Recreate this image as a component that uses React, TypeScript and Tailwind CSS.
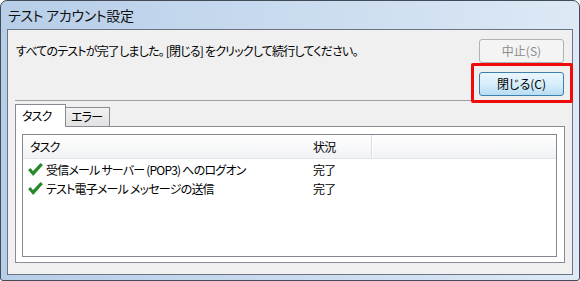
import { Fragment } from "react";

const TASKS = [
  { name: "受信メール サーバー (POP3) へのログオン", status: "完了" },
  { name: "テスト電子メール メッセージの送信", status: "完了" },
];

function CheckIcon() {
  return (
    <svg width="15" height="13" viewBox="0 0 15 13" className="shrink-0">
      <path
        d="M0.5 7 L2.5 5.5 L5 8.5 L12.5 0.5 L14.5 2 L5.2 12.5 Z"
        fill="#1f8f24"
        stroke="#12661a"
        strokeWidth="0.6"
        strokeLinejoin="round"
      />
    </svg>
  );
}

export default function App() {
  return (
    <div className="w-[580px] h-[281px] flex flex-col rounded-t-[7px] rounded-b-[3px] border border-[#424c58] bg-gradient-to-r from-[#b7cee8] via-[#c9dbef] to-[#dde9f5] font-['Meiryo_UI','Noto_Sans_CJK_JP',sans-serif] [font-feature-settings:'palt'] text-[12px] tracking-[-0.8px] text-black">
      {/* title bar */}
      <div className="h-[28px] flex items-center pl-[7px] text-[14px] tracking-[-0.3px] text-[#111]">
        テスト アカウント設定
      </div>

      {/* client area */}
      <div className="flex-1 mx-[6px] mb-[5px] border border-[#6b7480] bg-[#f0f0f0] flex flex-col">
        <div className="flex items-start">
          <p className="pl-[8px] pt-[13px] leading-[16px]">
            すべてのテストが完了しました。 [閉じる] をクリックして続行してください。
          </p>
          <div className="ml-auto pr-[8px] pt-[9px] flex flex-col gap-[9px]">
            <button className="w-[85px] h-[24px] rounded-[3px] border border-[#adb2b5] bg-[#f4f4f4] text-[#8c8c8c] leading-none tracking-[0px]">
              中止(S)
            </button>
            <div className="relative">
              <button className="w-[85px] h-[24px] rounded-[3px] border border-[#3c7fb1] bg-gradient-to-b from-[#ebf6fd] via-[#d8eefb] to-[#b6dcf3] text-black leading-none tracking-[0px]">
                閉じる(C)
              </button>
              <span className="pointer-events-none absolute -left-[8px] -right-[9px] -top-[9px] -bottom-[7px] rounded-[2px] border-[3px] border-[#f00a0a]" />
            </div>
          </div>
        </div>

        <div className="mt-[4px] mx-[7px] h-px bg-[#a0a0a0]" />

        {/* tabs */}
        <div className="mt-[3px] ml-[7px] flex items-end">
          <div className="relative z-10 -mb-px w-[51px] h-[23px] border border-b-0 border-[#898c95] bg-white pl-[6px] pt-[3px] leading-[16px]">
            タスク
          </div>
          <div className="w-[44px] h-[19px] border border-l-0 border-b-0 border-[#898c95] bg-gradient-to-b from-[#f2f2f2] to-[#e2e2e2] pl-[5px] leading-[18px]">
            エラー
          </div>
        </div>

        <div className="flex-1 mx-[7px] mb-[11px] border border-[#898c95] bg-white pl-[6px] pr-[7px] pt-[7px] pb-[5px] flex flex-col">
          <div className="flex-1 border border-[#828790] bg-white flex flex-col">
            <div className="h-[24px] flex items-stretch border-b border-[#e3e4e6] bg-gradient-to-b from-white to-[#f1f2f4]">
              <div className="w-[283px] pl-[7px] flex items-center">タスク</div>
              <div className="w-[66px] pl-[7px] flex items-center border-r border-[#dcdde1]">状況</div>
              <div className="w-px bg-white" />
              <div className="flex-1" />
            </div>
            <div className="pt-[1px] flex flex-col">
              {TASKS.map((t) => (
                <Fragment key={t.name}>
                  <div className="h-[19px] flex items-center">
                    <div className="w-[283px] pl-[5px] flex items-center gap-[3px]">
                      <CheckIcon />
                      <span>{t.name}</span>
                    </div>
                    <div className="pl-[7px]">{t.status}</div>
                  </div>
                </Fragment>
              ))}
            </div>
          </div>
        </div>
      </div>
    </div>
  );
}
